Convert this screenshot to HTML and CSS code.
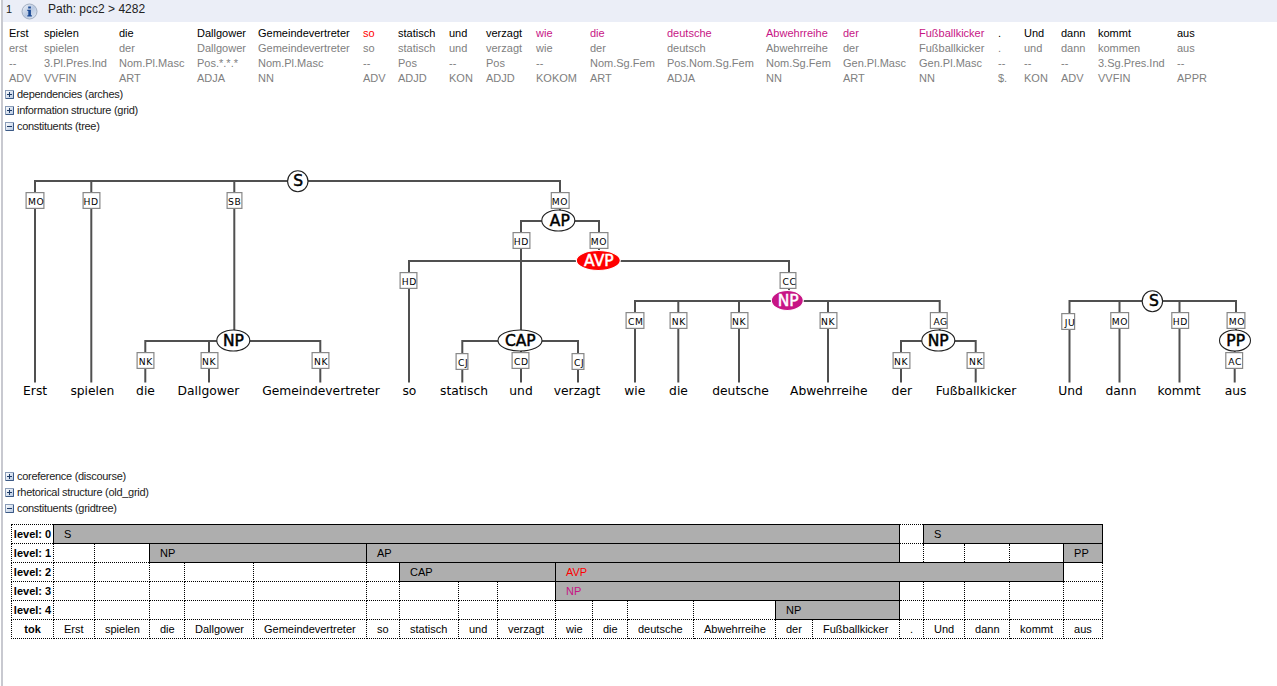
FILE: index.html
```html
<!DOCTYPE html>
<html lang="de">
<head>
<meta charset="utf-8">
<title>Path: pcc2 &gt; 4282</title>
<link rel="stylesheet" href="styles.css">
</head>
<body>
<main class="result">
  <header class="bar">
    <span class="num">1</span>
    <svg class="info" width="17" height="17" viewBox="0 0 17 17">
      <defs><linearGradient id="g" x1="0" y1="0" x2="1" y2="1"><stop offset="0" stop-color="#f4f6fa"/><stop offset=".5" stop-color="#b9c9e2"/><stop offset="1" stop-color="#e6ecf5"/></linearGradient></defs>
      <circle cx="8.5" cy="8.5" r="7.5" fill="url(#g)" stroke="#a3afc2"/>
      <path d="M7.2 3.5h2.7v2H7.2zM6.3 6.8h3.6v5.5h1v1.2H6.3v-1.2h1V8H6.3z" fill="#1c4a94"/>
    </svg>
    <span class="path">Path: pcc2 &gt; 4282</span>
  </header>

  <section class="kwic">
    <div class="tok"><b>Erst</b><i>erst</i><i>--</i><i>ADV</i></div>
    <div class="tok"><b>spielen</b><i>spielen</i><i>3.Pl.Pres.Ind</i><i>VVFIN</i></div>
    <div class="tok"><b>die</b><i>der</i><i>Nom.Pl.Masc</i><i>ART</i></div>
    <div class="tok"><b>Dallgower</b><i>Dallgower</i><i>Pos.*.*.*</i><i>ADJA</i></div>
    <div class="tok"><b>Gemeindevertreter</b><i>Gemeindevertreter</i><i>Nom.Pl.Masc</i><i>NN</i></div>
    <div class="tok"><b class="red">so</b><i>so</i><i>--</i><i>ADV</i></div>
    <div class="tok"><b>statisch</b><i>statisch</i><i>Pos</i><i>ADJD</i></div>
    <div class="tok"><b>und</b><i>und</i><i>--</i><i>KON</i></div>
    <div class="tok"><b>verzagt</b><i>verzagt</i><i>Pos</i><i>ADJD</i></div>
    <div class="tok"><b class="violet">wie</b><i>wie</i><i>--</i><i>KOKOM</i></div>
    <div class="tok"><b class="violet">die</b><i>der</i><i>Nom.Sg.Fem</i><i>ART</i></div>
    <div class="tok"><b class="violet">deutsche</b><i>deutsch</i><i>Pos.Nom.Sg.Fem</i><i>ADJA</i></div>
    <div class="tok"><b class="violet">Abwehrreihe</b><i>Abwehrreihe</i><i>Nom.Sg.Fem</i><i>NN</i></div>
    <div class="tok"><b class="violet">der</b><i>der</i><i>Gen.Pl.Masc</i><i>ART</i></div>
    <div class="tok"><b class="violet">Fußballkicker</b><i>Fußballkicker</i><i>Gen.Pl.Masc</i><i>NN</i></div>
    <div class="tok"><b>.</b><i>.</i><i>--</i><i>$.</i></div>
    <div class="tok"><b>Und</b><i>und</i><i>--</i><i>KON</i></div>
    <div class="tok"><b>dann</b><i>dann</i><i>--</i><i>ADV</i></div>
    <div class="tok"><b>kommt</b><i>kommen</i><i>3.Sg.Pres.Ind</i><i>VVFIN</i></div>
    <div class="tok"><b>aus</b><i>aus</i><i>--</i><i>APPR</i></div>
  </section>

  <svg width="0" height="0" class="defs">
    <defs>
      <linearGradient id="bx" x1="0" y1="0" x2="1" y2="1"><stop offset="0" stop-color="#fff"/><stop offset="1" stop-color="#b4c6e0"/></linearGradient>
      <symbol id="minus" viewBox="0 0 9 9"><rect x=".5" y=".5" width="8" height="8" fill="url(#bx)" stroke="#8a9cb8"/><path d="M8.5 1v7.5H1" fill="none" stroke="#3c5a86"/><path d="M2 4.5h5" stroke="#1d3a66"/></symbol>
      <symbol id="plus" viewBox="0 0 9 9"><use href="#minus"/><path d="M4.5 2v5" stroke="#1d3a66"/></symbol>
    </defs>
  </svg>

  <div class="vis"><svg width="9" height="9"><use href="#plus"/></svg>dependencies (arches)</div>
  <div class="vis"><svg width="9" height="9"><use href="#plus"/></svg>information structure (grid)</div>
  <div class="vis"><svg width="9" height="9"><use href="#minus"/></svg>constituents (tree)</div>

  <svg class="tree" width="1274" height="334" viewBox="3 134 1274 334">
    <g class="lines">
      <path d="M35 382.5V181H560V221M91.3 181V382.5M234.3 181V341"/>
      <path d="M145.3 382.5V341H320.3V382.5M209 341V382.5"/>
      <path d="M521 382.5V221H599V261M409 382.5V261H789V301"/>
      <path d="M462.3 382.5V341H578V382.5"/>
      <path d="M635 382.5V301H939.7V341M678.3 301V382.5M739 301V382.5M828 301V382.5"/>
      <path d="M901 382.5V341H975.7V382.5"/>
      <path d="M1069.5 382.5V301H1236V341M1119.5 301V382.5M1179.5 301V382.5M1234.7 341V382.5"/>
    </g>
    <g class="nodes">
      <ellipse cx="297.8" cy="181.2" rx="10.2" ry="10.5"/>
      <ellipse cx="558.3" cy="220.5" rx="16.5" ry="10.5"/>
      <ellipse cx="233.3" cy="340.5" rx="16.5" ry="10.5"/>
      <ellipse cx="520" cy="340.5" rx="22" ry="10.5"/>
      <ellipse cx="938.3" cy="340.5" rx="16.5" ry="10.5"/>
      <ellipse cx="1152.4" cy="301.2" rx="10.2" ry="10.5"/>
      <ellipse cx="1235" cy="340.5" rx="15.5" ry="10.5"/>
      <ellipse class="hit-a" cx="598.3" cy="260.5" rx="22" ry="10"/>
      <ellipse class="hit-b" cx="787.3" cy="300.5" rx="16" ry="10"/>
    </g>
    <g class="cats">
      <text x="298.2" y="186">S</text><text x="559.8" y="226">AP</text>
      <text x="233.5" y="346">NP</text><text x="520.3" y="346">CAP</text>
      <text x="938.2" y="346">NP</text><text x="1154" y="306">S</text>
      <text x="1235.7" y="346">PP</text>
      <text class="inv" x="598.8" y="266">AVP</text><text class="inv" x="788.2" y="306">NP</text>
    </g>
    <g class="edges">
      <svg x="25.5" y="192" width="19" height="17"><rect width="100%" height="100%"/><text x="2.5" y="13">MO</text></svg>
      <svg x="82.5" y="192" width="18" height="17"><rect width="100%" height="100%"/><text x="1" y="13">HD</text></svg>
      <svg x="226.5" y="192" width="16" height="17"><rect width="100%" height="100%"/><text x="1.5" y="13">SB</text></svg>
      <svg x="136.5" y="352" width="18" height="17"><rect width="100%" height="100%"/><text x="2.2" y="13">NK</text></svg>
      <svg x="200.5" y="352" width="18" height="17"><rect width="100%" height="100%"/><text x="1.5" y="13">NK</text></svg>
      <svg x="311.5" y="352" width="18" height="17"><rect width="100%" height="100%"/><text x="2.5" y="13">NK</text></svg>
      <svg x="550.7" y="192" width="19" height="17"><rect width="100%" height="100%"/><text x="1" y="13">MO</text></svg>
      <svg x="512.5" y="232" width="18" height="17"><rect width="100%" height="100%"/><text x="1.2" y="13">HD</text></svg>
      <svg x="589.5" y="232" width="19" height="17"><rect width="100%" height="100%"/><text x="1.2" y="13">MO</text></svg>
      <svg x="399.5" y="272" width="18" height="17"><rect width="100%" height="100%"/><text x="2.2" y="13">HD</text></svg>
      <svg x="455.5" y="353" width="13" height="17"><rect width="100%" height="100%"/><text x="2.6" y="13">CJ</text></svg>
      <svg x="511.5" y="352" width="18" height="17"><rect width="100%" height="100%"/><text x="2.6" y="13">CD</text></svg>
      <svg x="571.5" y="353" width="13" height="17"><rect width="100%" height="100%"/><text x="2.6" y="13">CJ</text></svg>
      <svg x="779.5" y="272" width="17" height="17"><rect width="100%" height="100%"/><text x="2.9" y="13">CC</text></svg>
      <svg x="625.5" y="312" width="19" height="17"><rect width="100%" height="100%"/><text x="2.6" y="13">CM</text></svg>
      <svg x="669.5" y="312" width="18" height="17"><rect width="100%" height="100%"/><text x="2.2" y="13">NK</text></svg>
      <svg x="730.5" y="312" width="18" height="17"><rect width="100%" height="100%"/><text x="1.5" y="13">NK</text></svg>
      <svg x="819.5" y="312" width="18" height="17"><rect width="100%" height="100%"/><text x="1.5" y="13">NK</text></svg>
      <svg x="929.8" y="312" width="18" height="17"><rect width="100%" height="100%"/><text x="3.6" y="13">AG</text></svg>
      <svg x="892.5" y="352" width="18" height="17"><rect width="100%" height="100%"/><text x="1.5" y="13">NK</text></svg>
      <svg x="966.5" y="352" width="18" height="17"><rect width="100%" height="100%"/><text x="2.5" y="13">NK</text></svg>
      <svg x="1061.2" y="313" width="14" height="17"><rect width="100%" height="100%"/><text x="3.6" y="13">JU</text></svg>
      <svg x="1110.2" y="312" width="19" height="17"><rect width="100%" height="100%"/><text x="1.6" y="13">MO</text></svg>
      <svg x="1171.2" y="312" width="18" height="17"><rect width="100%" height="100%"/><text x="1.6" y="13">HD</text></svg>
      <svg x="1226.5" y="312" width="19" height="17"><rect width="100%" height="100%"/><text x="2.3" y="13">MO</text></svg>
      <svg x="1225.2" y="352" width="18" height="17"><rect width="100%" height="100%"/><text x="3" y="13">AC</text></svg>
    </g>
    <g class="leaves">
      <text x="35.1" y="395">Erst</text><text x="92.4" y="395">spielen</text><text x="145.5" y="395">die</text>
      <text x="208.5" y="395">Dallgower</text><text x="321" y="395">Gemeindevertreter</text><text x="409.4" y="395">so</text>
      <text x="464" y="395">statisch</text><text x="521" y="395">und</text><text x="577" y="395">verzagt</text>
      <text x="634.7" y="395">wie</text><text x="678.5" y="395">die</text><text x="740.5" y="395">deutsche</text>
      <text x="828.8" y="395">Abwehrreihe</text><text x="901.8" y="395">der</text><text x="976" y="395">Fußballkicker</text>
      <text x="1070.5" y="395">Und</text><text x="1121" y="395">dann</text><text x="1179" y="395">kommt</text><text x="1235.5" y="395">aus</text>
    </g>
  </svg>

  <div class="vis"><svg width="9" height="9"><use href="#plus"/></svg>coreference (discourse)</div>
  <div class="vis"><svg width="9" height="9"><use href="#plus"/></svg>rhetorical structure (old_grid)</div>
  <div class="vis"><svg width="9" height="9"><use href="#minus"/></svg>constituents (gridtree)</div>

  <table class="grid">
    <colgroup>
      <col style="width:42px"><col style="width:41px"><col style="width:55px"><col style="width:35px"><col style="width:69px"><col style="width:113px"><col style="width:33px"><col style="width:59px"><col style="width:39px"><col style="width:58px"><col style="width:37px"><col style="width:35px"><col style="width:66px"><col style="width:82px"><col style="width:37px"><col style="width:87px"><col style="width:24px"><col style="width:41px"><col style="width:45px"><col style="width:54px"><col style="width:39px">
    </colgroup>
    <tr><th>level: 0</th><td class="span" colspan="15">S</td><td></td><td class="span" colspan="4">S</td></tr>
    <tr><th>level: 1</th><td></td><td></td><td class="span" colspan="3">NP</td><td class="span" colspan="10">AP</td><td></td><td></td><td></td><td></td><td class="span">PP</td></tr>
    <tr><th>level: 2</th><td></td><td></td><td></td><td></td><td></td><td></td><td class="span" colspan="3">CAP</td><td class="span red" colspan="10">AVP</td><td></td></tr>
    <tr><th>level: 3</th><td></td><td></td><td></td><td></td><td></td><td></td><td></td><td></td><td></td><td class="span violet" colspan="6">NP</td><td></td><td></td><td></td><td></td><td></td></tr>
    <tr><th>level: 4</th><td></td><td></td><td></td><td></td><td></td><td></td><td></td><td></td><td></td><td></td><td></td><td></td><td></td><td class="span" colspan="2">NP</td><td></td><td></td><td></td><td></td><td></td></tr>
    <tr><th>tok</th><td>Erst</td><td>spielen</td><td>die</td><td>Dallgower</td><td>Gemeindevertreter</td><td>so</td><td>statisch</td><td>und</td><td>verzagt</td><td>wie</td><td>die</td><td>deutsche</td><td>Abwehrreihe</td><td>der</td><td>Fußballkicker</td><td>.</td><td>Und</td><td>dann</td><td>kommt</td><td>aus</td></tr>
  </table>
</main>
</body>
</html>
```
FILE: styles.css
```css
body {
  margin: 0;
  background: #fff;
  font: 11px/15px "Liberation Sans", Arial, sans-serif;
  color: #000;
  overflow: hidden;
}
.result {
  box-sizing: border-box;
  height: 686px;
  margin-left: 1px;
  border-left: 2px solid #c8c9d0;
}
.bar {
  display: flex;
  box-sizing: border-box;
  height: 22px;
  padding: 2px 0 0 3px;
  background: #ebeef7;
  color: #222;
}
.num { width: 15px; }
.info { margin: 1px 10px 0 0; }
.path { font-size: 12px; line-height: 14px; }
.kwic {
  display: grid;
  grid-template-columns: 35px 75px 78px 61px 105px 35px 51px 37px 50px 54px 77px 99px 77px 76px 79px 26px 37px 37px 79px 60px;
  padding: 4px 0 0 6px;
}
.tok b, .tok i {
  display: block;
  font-weight: normal;
  font-style: normal;
  white-space: nowrap;
}
.tok i { color: #808080; }
.tok .red, .grid .red { color: #f00; }
.tok .violet, .grid .violet { color: #c71585; }
.defs { display: block; }
.vis {
  display: flex;
  align-items: center;
  gap: 3px;
  height: 16px;
  padding-left: 2px;
  color: #222;
  letter-spacing: -0.29px;
}
.tree { display: block; font-family: "DejaVu Sans", sans-serif; }
.lines path { fill: none; stroke: #505050; stroke-width: 2; }
.nodes ellipse { fill: #fff; stroke: #222; stroke-width: 1.1; }
.nodes .hit-a { fill: #f00; stroke: #fff; }
.nodes .hit-b { fill: #c71585; stroke: #fff; }
.cats text { font-size: 15.5px; text-anchor: middle; stroke: #000; stroke-width: 0.5; }
.cats .inv { fill: #fff; stroke: #fff; }
.edges rect { fill: #fff; stroke: #888; stroke-width: 2.4; }
.edges text { font-size: 9.2px; letter-spacing: 0.6px; }
.leaves text { font-size: 12.3px; text-anchor: middle; }
.grid {
  width: 1092px;
  margin: 8px 0 0 8px;
  table-layout: fixed;
  border-collapse: collapse;
}
.grid tr { height: 19px; }
.grid th, .grid td {
  padding: 0 0 0 10px;
  border: 1px dotted #000;
  line-height: 18px;
  text-align: left;
  white-space: nowrap;
}
.grid th { padding: 0; text-align: center; }
.grid .span { border-style: solid; background: #aeaeae; }
```
